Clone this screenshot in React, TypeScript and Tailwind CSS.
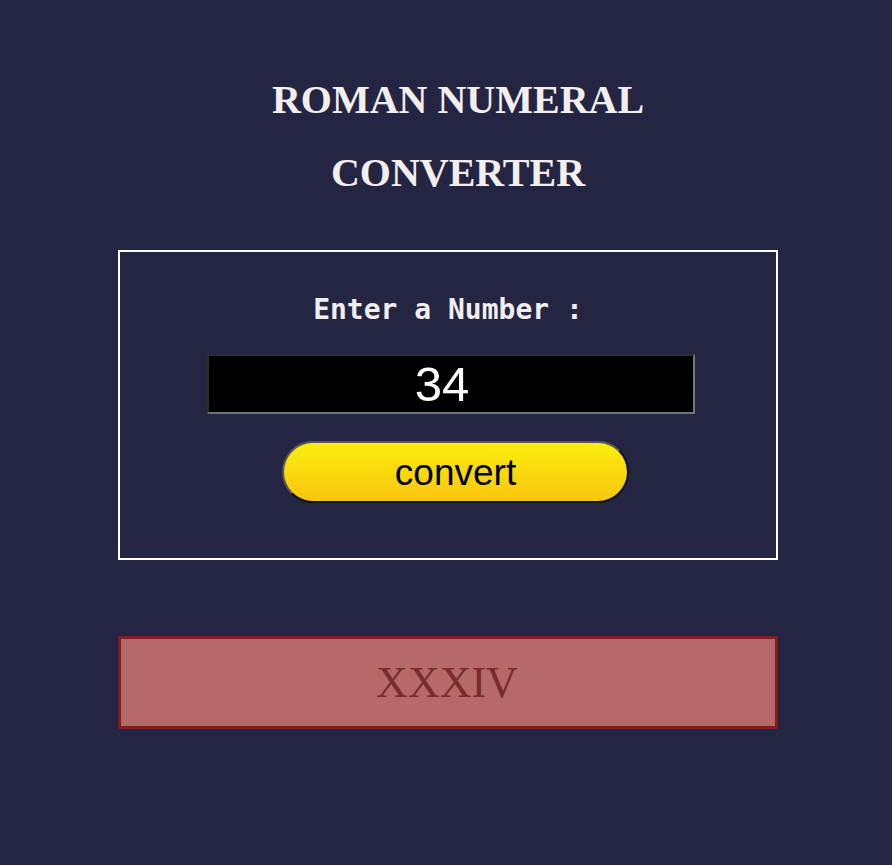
import { useState } from "react";

const toRoman = (n: number): string => {
  const map: [number, string][] = [
    [1000, "M"], [900, "CM"], [500, "D"], [400, "CD"],
    [100, "C"], [90, "XC"], [50, "L"], [40, "XL"],
    [10, "X"], [9, "IX"], [5, "V"], [4, "IV"], [1, "I"],
  ];
  let out = "";
  for (const [v, s] of map) {
    while (n >= v) {
      out += s;
      n -= v;
    }
  }
  return out;
};

const App: React.FC = () => {
  const [value, setValue] = useState("34");
  const [result, setResult] = useState(toRoman(34));

  const handleConvert = () => {
    const n = parseInt(value, 10);
    if (!isNaN(n) && n > 0 && n < 4000) setResult(toRoman(n));
  };

  return (
    <div className="min-h-[865px] bg-[#242443] pt-[63px]">
      <div className="ml-[118px] w-[660px]">
        <h1 className="pl-[20px] text-center text-[40px] leading-[73px] font-bold text-[#f3eeee] font-['Liberation_Serif',serif]">
          ROMAN NUMERAL
          <br />
          CONVERTER
        </h1>

        <div className="mt-[41px] h-[310px] border-2 border-white pt-[42px] flex flex-col">
          <label className="text-center text-[28px] leading-[32px] font-bold text-[#f0eeee] font-['DejaVu_Sans_Mono',monospace]">
            Enter a Number :
          </label>
          <input
            type="text"
            value={value}
            onChange={(e) => setValue(e.target.value)}
            className="mt-[28px] ml-[87px] w-[488px] h-[60px] pr-[18px] bg-black text-white text-center text-[49px] leading-none font-['Liberation_Sans',sans-serif] border-2 border-t-[#2e2e2e] border-l-[#2e2e2e] border-b-[#767676] border-r-[#767676] outline-none"
          />
          <button
            onClick={handleConvert}
            className="mt-[27px] ml-[162px] w-[347px] h-[62px] rounded-full bg-gradient-to-b from-[#fbee0c] to-[#f8c50e] text-black text-[37px] leading-none font-['Liberation_Sans',sans-serif] border-2 border-t-[#5a5a5a] border-l-[#5a5a5a] border-b-[#111111] border-r-[#111111]"
          >
            convert
          </button>
        </div>

        <div className="mt-[76px] h-[93px] border-[3px] border-[#831c1f] bg-[#b56a69] flex items-center justify-center">
          <span className="pr-[2px] text-[44px] leading-none text-[#7a2b2b] font-['Liberation_Serif',serif]">
            {result}
          </span>
        </div>
      </div>
    </div>
  );
};

export default App;
